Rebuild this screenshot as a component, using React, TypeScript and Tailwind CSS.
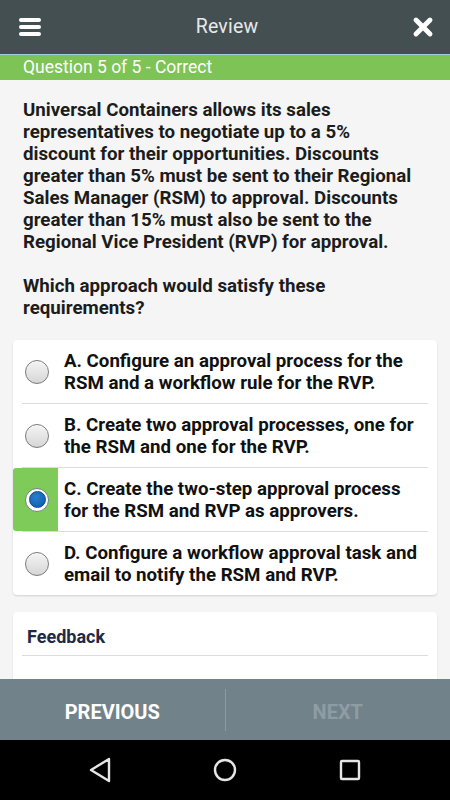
import { X } from "lucide-react";

interface Option {
  label: string;
  lines: string;
  selected?: boolean;
}

const options: Option[] = [
  { label: "A", lines: "A. Configure an approval process for the RSM and a workflow rule for the RVP." },
  { label: "B", lines: "B. Create two approval processes, one for the RSM and one for the RVP." },
  { label: "C", lines: "C. Create the two-step approval process for the RSM and RVP as approvers.", selected: true },
  { label: "D", lines: "D. Configure a workflow approval task and email to notify the RSM and RVP." },
];

function Radio({ checked }: { checked?: boolean }) {
  if (checked) {
    return (
      <div className="w-[24px] h-[24px] rounded-full border border-[#6b7f8a] bg-white flex items-center justify-center">
        <div className="w-[17px] h-[17px] rounded-full bg-[radial-gradient(circle_at_40%_35%,#2a7fd0,#0b55a8)] border border-[#0b4a90]" />
      </div>
    );
  }
  return (
    <div className="w-[24px] h-[24px] rounded-full border border-[#7a7a7a] bg-[linear-gradient(180deg,#f4f4f4,#d6d6d6)] shadow-[inset_0_1px_1px_rgba(255,255,255,0.8)]" />
  );
}

export default function App() {
  return (
    <div className="w-[450px] h-[800px] flex flex-col bg-[#f5f5f5] font-['Roboto',sans-serif] overflow-hidden">
      {/* Header */}
      <header className="h-[54px] bg-[#444f52] flex items-center justify-between px-[19px] shrink-0">
        <div className="flex flex-col gap-[3px] w-[22px]">
          <span className="h-[4px] rounded-[2px] bg-white" />
          <span className="h-[4px] rounded-[2px] bg-white" />
          <span className="h-[4px] rounded-[2px] bg-white" />
        </div>
        <h1 className="text-[19.5px] text-[#e6e9ea] tracking-[0.2px] ml-[4px]">Review</h1>
        <X className="w-[28px] h-[28px] text-white -mr-[6px]" strokeWidth={4.2} />
      </header>
      <div className="h-[1px] bg-[#9ccfd8] shrink-0" />
      <div className="h-[25px] bg-[#7dc355] flex items-center px-[23px] shrink-0">
        <span className="text-[17.5px] text-white leading-none">Question 5 of 5 - Correct</span>
      </div>

      {/* Content */}
      <main className="flex-1 overflow-hidden px-[13px]">
        <p className="pt-[19px] pl-[10px] pr-[12px] text-[18.7px] leading-[22px] font-bold text-[#1c1c1c]">
          Universal Containers allows its sales representatives to negotiate up to a 5% discount for their opportunities. Discounts greater than 5% must be sent to their Regional Sales Manager (RSM) to approval. Discounts greater than 15% must also be sent to the Regional Vice President (RVP) for approval.
          <br />
          <br />
          Which approach would satisfy these requirements?
        </p>

        <div className="mt-[21px] bg-white rounded-[4px] shadow-[0_1px_2px_rgba(0,0,0,0.15)]">
          {options.map((opt, i) => (
            <div key={opt.label}>
              {i > 0 && <div className="h-[1px] bg-[#dcdcdc] mx-[9px]" />}
              <div className="h-[63px] flex items-center">
                <div
                  className={`w-[45px] h-full flex items-center justify-center shrink-0 ${
                    opt.selected ? "bg-[#7fcb5a] rounded-l-[3px]" : ""
                  }`}
                >
                  <div className="ml-[3px]">
                    <Radio checked={opt.selected} />
                  </div>
                </div>
                <p className="pl-[6px] pr-[12px] text-[18.7px] leading-[22px] font-bold text-[#111]">
                  {opt.lines}
                </p>
              </div>
            </div>
          ))}
        </div>

        <div className="mt-[17px] bg-white rounded-[4px] shadow-[0_1px_2px_rgba(0,0,0,0.12)] h-[120px]">
          <h2 className="pt-[14px] px-[14px] text-[18px] leading-[22px] font-bold text-[#1f2a44]">Feedback</h2>
          <div className="mt-[7px] h-[1px] bg-[#dcdcdc] mx-[9px]" />
        </div>
      </main>

      {/* Bottom buttons */}
      <div className="h-[61px] bg-[#72828a] flex items-center shrink-0">
        <button className="flex-1 text-center text-[20px] font-bold text-white pt-[4px]">PREVIOUS</button>
        <div className="w-[1px] h-[42px] bg-[#8c9aa1]" />
        <button className="flex-1 text-center text-[20px] font-bold text-[#8e9ca3] pt-[4px]">NEXT</button>
      </div>

      {/* Android nav bar */}
      <nav className="h-[60px] bg-black flex items-center justify-center gap-[101px] shrink-0">
        <svg width="24" height="26" viewBox="0 0 24 26">
          <path d="M21 2 L3 13 L21 24 Z" fill="none" stroke="#e6e6e6" strokeWidth="2.4" strokeLinejoin="round" />
        </svg>
        <svg width="24" height="24" viewBox="0 0 24 24">
          <circle cx="12" cy="12" r="10" fill="none" stroke="#e6e6e6" strokeWidth="2.4" />
        </svg>
        <svg width="24" height="24" viewBox="0 0 24 24">
          <rect x="3" y="3" width="18" height="18" rx="1" fill="none" stroke="#e6e6e6" strokeWidth="2.4" />
        </svg>
      </nav>
    </div>
  );
}
